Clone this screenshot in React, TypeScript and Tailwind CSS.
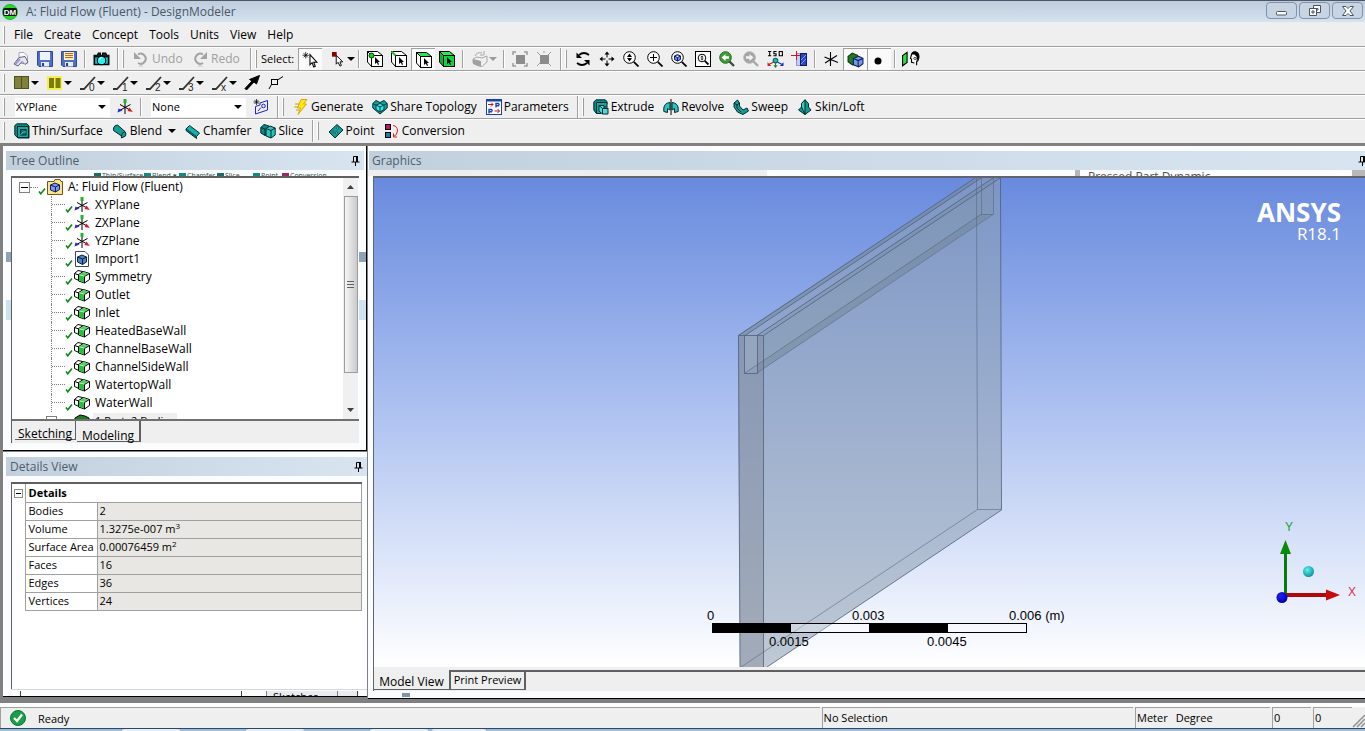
import type { ReactNode } from 'react'

type IconProps = { children: ReactNode; size?: number }

function Icon({ children, size = 16 }: IconProps) {
  return (
    <svg width={size} height={size} viewBox="0 0 16 16" fill="none" stroke="#000" strokeWidth="1" className="shrink-0" aria-hidden="true">
      {children}
    </svg>
  )
}

function Arrow({ muted = false }: { muted?: boolean }) {
  return (
    <svg width="8" height="4" viewBox="0 0 8 4" className="shrink-0" aria-hidden="true">
      <path d="M0 0H8L4 4Z" fill={muted ? '#9a9a9a' : '#000'} />
    </svg>
  )
}

/* ---------- toolbar icons ---------- */

const OpenIcon = () => (
  <Icon>
    <path d="M6 1.500H11L14.500 5V12.500H6Z" fill="#fafaff" stroke="#a8a8bc" />
    <path d="M1 13L6 6.500L12 5.500L15 11L12 13.500L9 10.500L5 15Z" fill="#e6e6f0" stroke="#606080" />
    <path d="M2.500 13L7 8" stroke="#9c9cd8" strokeWidth="2" />
  </Icon>
)

const SaveIcon = ({ lines = false }: { lines?: boolean }) => (
  <Icon>
    <path d="M.5.5H15.500V15.500H2L.5 14Z" fill="#5070c8" stroke="#2c4898" />
    <rect x="3" y="1" width="10" height="8" fill={lines ? '#fff0c0' : '#eef2ff'} stroke="none" />
    {lines && <path d="M4 2.500H12M4 4.500H12M4 6.500H12" stroke="#c8641e" />}
    <rect x="4" y="11" width="8" height="4.500" fill="#e8ecf8" stroke="none" />
    <rect x="5" y="12" width="2" height="3" fill="#26408c" stroke="none" />
  </Icon>
)

const CameraIcon = () => (
  <Icon size={17}>
    <path d="M1 4H4L5 2H7V4H9V2H12L13 4H15V13H1Z" fill="#222" />
    <rect x="1.500" y="5.500" width="13" height="7" fill="#1bbcbc" />
    <circle cx="8" cy="9" r="4" fill="#2cf0f4" stroke="#000" />
    <path d="M6 8L8 6" stroke="#fff" />
  </Icon>
)

const UndoIcon = () => (
  <Icon>
    <path d="M5 3.500A5 5 0 1 1 5 12" stroke="#a3a3a3" strokeWidth="2" />
    <path d="M1 1V8H8Z" fill="#a3a3a3" stroke="none" />
    <path d="M5.500 15H10" stroke="#c4c4c4" />
  </Icon>
)

const RedoIcon = () => (
  <Icon>
    <path d="M11 3.500A5 5 0 1 0 11 12" stroke="#a3a3a3" strokeWidth="2" />
    <path d="M15 1V8H8Z" fill="#a3a3a3" stroke="none" />
    <path d="M6 15H10.500" stroke="#c4c4c4" />
  </Icon>
)

const NewSelectIcon = () => (
  <Icon size={17}>
    <path d="M3.500 1V7M.5 4H6.500M1.500 2L5.500 6M5.500 2L1.500 6" strokeWidth=".7" />
    <path d="M7.500 3.500V13L9.500 11L11 15L12.500 14.300L11 10.500H14Z" fill="#fff" />
  </Icon>
)

const FilterIcon = ({ kind }: { kind: 'point' | 'edge' | 'face' | 'body' }) => (
  <Icon>
    <path d="M.5.500H10.500L15.500 4.500H4.500Z" fill={kind === 'face' || kind === 'body' ? '#28e850' : '#fff'} />
    <path d="M.5.500V11L4.500 15.500V4.500Z" fill={kind === 'body' ? '#0eb02c' : '#fff'} />
    <rect x="4.500" y="4.500" width="11" height="11" fill={kind === 'body' ? '#12d438' : '#fff'} />
    <path d="M8 6V13L9.700 11.500L11 14L12 13.500L11 11H13Z" fill="#000" stroke="none" />
    {kind === 'point' && <circle cx="4.500" cy="4.500" r="2.500" fill="#28c828" stroke="#064006" />}
    {kind === 'edge' && <path d="M.5.500L4.500 4.500" stroke="#28b828" strokeWidth="2" />}
  </Icon>
)

const ExtendIcon = () => (
  <Icon>
    <path d="M1 8L5 6L10 7L15 5V11L10 15.500L5 14.500L1 12Z" fill="#f0f0f0" stroke="#a8a8a8" />
    <path d="M1 8L9 10V15.500L1 13Z" fill="#a0a0a0" stroke="none" />
    <path d="M3 5Q5 .500 10 2M12 0V4H8" stroke="#a8a8a8" />
  </Icon>
)

const BoxSelectIcon = ({ cross = false }: { cross?: boolean }) => (
  <Icon>
    <rect x="4" y="4" width="9" height="9" fill="#8c8c8c" stroke="none" />
    {cross ? (
      <path d="M1 1L4 4M15 1L12 4M1 15L4 12M15 15L12 12M8 0V2" stroke="#9c9c9c" />
    ) : (
      <path d="M1 4V1H4M12 1H15V4M15 12V15H12M4 15H1V12" stroke="#9c9c9c" strokeWidth="1.500" />
    )}
  </Icon>
)

const RotateIcon = () => (
  <Icon>
    <path d="M4 4Q9 0 14 4" strokeWidth="1.800" />
    <path d="M1.500 1.500V7H7Z" fill="#000" stroke="none" />
    <path d="M12 12Q7 16 2 12" strokeWidth="1.800" />
    <path d="M14.500 14.500V9H9Z" fill="#000" stroke="none" />
  </Icon>
)

const PanIcon = () => (
  <Icon>
    <path d="M8 2V6.500M8 9.500V14M2 8H6.500M9.500 8H14" />
    <path d="M8 .500L10.500 3.500H5.500ZM8 15.500L10.500 12.500H5.500ZM.5 8L3.500 5.500V10.500ZM15.500 8L12.500 5.500V10.500Z" fill="#000" stroke="none" />
  </Icon>
)

const LensIcon = ({ kind }: { kind: 'zoom' | 'plus' | 'fit' | 'window' }) => (
  <Icon>
    {kind === 'window' && <rect x=".5" y=".5" width="15" height="15" fill="#fff" />}
    <circle cx={kind === 'window' ? 7 : 6.5} cy={kind === 'window' ? 7 : 6.5} r={kind === 'window' ? 3.8 : 5.8} fill="#fff" />
    <path d={kind === 'window' ? 'M9.800 9.800L13.500 13.500' : 'M10.800 10.800L15.500 15.500'} strokeWidth="1.800" />
    {kind === 'plus' && <path d="M6.500 3V10M3 6.500H10" />}
    {kind === 'fit' && <path d="M3.500 5L6.500 3.500L9.500 5V8.500L6.500 10L3.500 8.500ZM3.500 5L6.500 6.500L9.500 5M6.500 6.500V10" fill="#6c88f0" stroke="#101c70" />}
    {kind === 'zoom' && <path d="M6.500 2.500L9 6H4ZM6.500 10.500L9 7H4Z" fill="#000" stroke="none" />}
    {kind === 'window' && <path d="M7 4.500L8.500 6.500H5.500ZM7 9.500L8.500 7.500H5.500Z" fill="#000" stroke="none" />}
  </Icon>
)

const ViewStepIcon = ({ muted = false }: { muted?: boolean }) => (
  <Icon>
    <path d="M10.500 10.500L15 15" stroke={muted ? '#a8a8a8' : '#404840'} strokeWidth="2.400" />
    <circle cx="6.500" cy="6.500" r="5.800" fill={muted ? '#a4a4a4' : '#3c9c34'} stroke={muted ? '#b4b4b4' : '#286820'} />
    {muted ? (
      <path d="M10.500 6.500L6.500 3V5.200H3V7.800H6.500V10Z" fill="#f4f4f4" stroke="none" />
    ) : (
      <path d="M2.500 6.500L6.500 3V5.200H10V7.800H6.500V10Z" fill="#fff" stroke="none" />
    )}
  </Icon>
)

const IsoIcon = () => (
  <Icon size={17}>
    <path d="M2.500 0V5M1 .500H4M1 4.500H4M9 .500H6.500V2.500H8.500V4.500H6M11.500.500H14.500V4.500H11.500Z" />
    <circle cx="8" cy="9" r="2.200" fill="#20b8b8" stroke="#086868" />
    <path d="M6 10.500L2 12.500" stroke="#d01818" />
    <path d="M.5 10.500V14H4Z" fill="#d01818" stroke="none" />
    <path d="M10 10.500L14 12.500" stroke="#1830c0" />
    <path d="M15.500 10.500V14H12Z" fill="#1830c0" stroke="none" />
    <path d="M8 11V14" stroke="#108830" />
    <path d="M6 13.500H10L8 16Z" fill="#108830" stroke="none" />
  </Icon>
)

const LookAtIcon = () => (
  <Icon>
    <rect x="5.500" y="2.500" width="4" height="12" fill="#c4ccf4" stroke="#8c98d8" />
    <rect x="9.500" y="2.500" width="6" height="12" fill="#2848c8" stroke="#101c60" />
    <path d="M10 9L15 4M10 13L15 8" stroke="#8ca0f0" />
    <path d="M0 4.500H9M5.500 0V9" stroke="#d01818" />
  </Icon>
)

const PlaneIcon = () => (
  <Icon>
    <path d="M7.500 1V15M1.500 6L15 11.500M2 12L14 4.500" strokeWidth="1.100" />
  </Icon>
)

const TriadIcon = () => (
  <Icon>
    <path d="M8 3V15M2.500 11.500L13.500 5.500M3 5.500L13 11" />
    <path d="M6.500 0H9.500V4H6.500Z" fill="#18b828" stroke="none" />
    <path d="M15.800 13L10.500 12L12.500 8.500Z" fill="#d81c28" stroke="none" />
    <path d="M.5 13.500L1.500 9.500L5.500 11.500Z" fill="#2028d8" stroke="none" />
  </Icon>
)

const DisplayModelIcon = () => (
  <Icon size={17}>
    <path d="M1 5L5 2L10 4V10L5 13L1 10Z" fill="#1c7c24" stroke="#083808" />
    <path d="M6 7L11 5L15 7V12L11 15L6 13Z" fill="#7898ec" stroke="#101c60" />
    <path d="M6 7L10.500 9L15 7M10.500 9V15" stroke="#101c60" />
  </Icon>
)

const DisplayPointsIcon = () => (
  <Icon>
    <circle cx="6" cy="9" r="3.500" fill="#000" stroke="none" />
  </Icon>
)

const FaceViewIcon = () => (
  <Icon size={18}>
    <path d="M.5 5L4.500 2V11L.5 14Z" fill="#20e838" />
    <path d="M8.500 4Q9 1.500 12 1.500Q15.500 2.500 15 7Q14.500 9.500 13 10.500V13.500M8.500 4L7.500 7.500L8.500 8V11L11 11.500" fill="#fff" />
    <path d="M8.500 4Q9 1 12 1.500Q15.500 2.500 15 7L13 10L13 6L11 4Z" fill="#000" stroke="none" />
    <circle cx="11.500" cy="7.500" r="1" fill="#fff" stroke="#000" strokeWidth=".6" />
  </Icon>
)

const EdgeColorIcon = ({ bright = false }: { bright?: boolean }) => (
  <Icon>
    {bright ? (
      <>
        <rect x="0" y="1" width="15" height="14" fill="#f4f050" stroke="none" />
        <path d="M2 3H7V13H2ZM8.500 3H13.500V13H8.500Z" fill="#7c7c10" stroke="none" />
      </>
    ) : (
      <>
        <rect x=".5" y="1.500" width="14" height="12" fill="#80803c" stroke="#50501c" />
        <path d="M7.500 2V13" stroke="#50501c" />
      </>
    )}
  </Icon>
)

const EdgeLineIcon = ({ mark }: { mark: string }) => (
  <Icon>
    <path d="M0 14H4L15 2" strokeWidth="1.800" stroke="#333" />
    <text x="9" y="16" fontSize="10" fill="#222" stroke="none" fontFamily="Liberation Sans, sans-serif">
      {mark}
    </text>
  </Icon>
)

const BigArrowIcon = () => (
  <Icon>
    <path d="M15.500.500L12.500 9L10 7L2.500 15L1 13.500L8 6L5.500 4.500Z" fill="#000" />
  </Icon>
)

const VertexFlagIcon = () => (
  <Icon>
    <rect x="3.500" y="4.500" width="6" height="5" fill="#f0f0f0" />
    <path d="M9.500 5L15 1.500M3.500 9.500L1 14" />
  </Icon>
)

const NewSketchIcon = () => (
  <Icon>
    <path d="M2.500 7.500L7 6V4L14.500 1.500V11L2.500 15Z" stroke="#2020c8" />
    <circle cx="10.500" cy="7" r="1.800" stroke="#2020c8" />
    <path d="M5 12L8 8.500" stroke="#2020c8" />
    <path d="M3.500 0V6M.500 3H6.500M1.500 1L5.500 5M5.500 1L1.500 5" strokeWidth=".7" />
  </Icon>
)

const GenerateIcon = () => (
  <Icon>
    <path d="M8 .5H14L10.500 5H13.500L5 15.500L7.500 9H4.500Z" fill="#ffe818" stroke="#d8a808" />
    <path d="M2 5H6M1 8H5M3 11H6" stroke="#d0a010" />
  </Icon>
)

const ShareIcon = () => (
  <Icon>
    <path d="M.8 4.500L4 1.500L8 3.500L12 1.500L15.200 4.500V9L8 15L.8 9Z" fill="#18a0a0" stroke="#022c2c" />
    <path d="M4 6L8 4.500L12 6V10.500L8 13L4 10.500Z" fill="#38e4e4" stroke="#044" />
    <path d="M4 6L8 8L12 6M8 8V13M.8 4.500L4 6M15.200 4.500L12 6" stroke="#044" />
  </Icon>
)

const ParametersIcon = () => (
  <Icon>
    <rect x=".5" y=".5" width="15" height="15" fill="#fff" stroke="#1840a8" />
    <path d="M1 1.500H15" stroke="#1840a8" strokeWidth="2" />
    <path d="M10 8.500V4.500H12.500Q13.800 5.500 12.500 6.800H10M3 14.500V10.500H5.500Q6.800 11.500 5.500 12.800H3" stroke="#1840c8" strokeWidth="1.400" />
    <path d="M2 5.500H7M5 3.500L7 5.500L5 7.500M8.500 12H13.500M11.500 10L13.500 12L11.500 14" stroke="#c01818" />
  </Icon>
)

const ExtrudeIcon = () => (
  <Icon>
    <path d="M.8 3L3 .8H12L14 2.500V5H6V14H3L.8 11Z" fill="#0c8484" stroke="#022c2c" />
    <path d="M3.500 3.500H14V8H8V14.500H3.500Z" fill="#18a4a0" stroke="#022c2c" />
    <path d="M6 6.500H11V9H15V15H9.500L6 12Z" fill="#48dcdc" stroke="#022c2c" />
    <path d="M6 6.500L9.500 9.500H15M9.500 9.500V15" stroke="#022c2c" />
  </Icon>
)

const RevolveIcon = () => (
  <Icon>
    <path d="M.8 9Q1.500 4 7 3.500V11L4.500 9.500V13.500L.8 12.500Z" fill="#28c4c4" stroke="#022c2c" />
    <path d="M15.200 9Q14.500 4 9 3.500V11L11.500 9.500V13.500L15.200 12.500Z" fill="#28c4c4" stroke="#022c2c" />
    <path d="M8 0V16" />
  </Icon>
)

const SweepIcon = () => (
  <Icon>
    <path d="M1 4L4.500 1L6.500 4V7L10 11L14 9L15.500 12L10 15.500L4.500 13L1 8Z" fill="#149c98" stroke="#022c2c" />
    <path d="M1 4L4 6L6.500 4M4 6V9L8 13" stroke="#022c2c" />
  </Icon>
)

const LoftIcon = () => (
  <Icon>
    <path d="M8 .8L11.500 4.500V8L14 11L8 15.500L1.500 11L4.500 8V4.500Z" fill="#149890" stroke="#022c2c" />
    <path d="M8 .8V15.500L4.500 8V4.500Z" fill="#40c8c4" stroke="#022c2c" />
  </Icon>
)

const ThinIcon = () => (
  <Icon>
    <path d="M.8 2.500L3 .8H13L15 3V15H4L.8 12Z" fill="#0c8884" stroke="#022c2c" />
    <rect x="3.500" y="3.500" width="11" height="11" fill="#18a4a0" stroke="#022c2c" />
    <rect x="6.500" y="6.500" width="5.500" height="5.500" fill="#0a6c6c" stroke="#022c2c" />
    <path d="M6.500 12L9 9H12" stroke="#3cc" />
  </Icon>
)

const BlendIcon = () => (
  <Icon>
    <path d="M1.500 5Q2.500 2 5.500 2L13 8.500Q14.500 11 13.500 13L9.500 15Q9 14 9.500 13L1.500 7.500Z" fill="#149c98" stroke="#022c2c" />
    <path d="M9.500 13Q9.500 9.500 13 8.500" stroke="#022c2c" />
  </Icon>
)

const ChamferIcon = () => (
  <Icon>
    <path d="M1 6L4.500 2.500L14.500 10L11.500 13.500Z" fill="#18b0ac" stroke="#022c2c" />
    <path d="M1 6V7.500L11.500 15.500V13.500" fill="#0a6c6c" stroke="#022c2c" />
  </Icon>
)

const SliceIcon = () => (
  <Icon>
    <path d="M.8 4.500L4 1.500L9 3V11L5 12.500L.8 10Z" fill="#0c8884" stroke="#022c2c" />
    <path d="M6 5.500L10 3L15.200 5V12L11 15L6 13Z" fill="#28c4c0" stroke="#022c2c" />
    <path d="M6 5.500L11 7.500L15.200 5M11 7.500V15M.8 4.500L5 6V12.500" stroke="#022c2c" />
  </Icon>
)

const PointIcon = () => (
  <Icon>
    <path d="M1 9L9 1.500L15 7L7 15Z" fill="#149c98" stroke="#022c2c" />
    <circle cx="5" cy="9" r="1" fill="#9ff" stroke="#022c2c" strokeWidth=".7" />
    <circle cx="9.500" cy="5" r="1" fill="#9ff" stroke="#022c2c" strokeWidth=".7" />
    <circle cx="8.500" cy="10" r="1" fill="#9ff" stroke="#022c2c" strokeWidth=".7" />
  </Icon>
)

const ConversionIcon = () => (
  <Icon>
    <rect x="1.500" y="1.500" width="5" height="5" fill="#c01070" />
    <rect x="1.500" y="9.500" width="5" height="5" fill="#1880b0" />
    <path d="M9 2.500Q13.500 3 13.500 8Q13 12.500 9.500 13.500M9.500 10.500V14H13" stroke="#e02020" />
  </Icon>
)

/* ---------- tree icons ---------- */

const CheckMark = () => (
  <svg width="8" height="8" viewBox="0 0 8 8" className="mt-2 shrink-0" aria-hidden="true">
    <path d="M1 4.500L2.800 6.800L7 1.500" fill="none" stroke="#108818" strokeWidth="1.600" />
  </svg>
)

const FluidIcon = () => (
  <Icon>
    <path d="M.5 2.500H7L8 .500H13L14 2.500H15.500V15.500H.5Z" fill="#fce48c" stroke="#6c5818" />
    <path d="M3.500 6L8 4L12.500 6V10.500L8.500 13L3.500 11Z" fill="#7c98f0" stroke="#101c60" />
    <path d="M3.500 6L8.500 8L12.500 6M8.500 8V13" stroke="#101c60" />
  </Icon>
)

const ImportIcon = () => (
  <Icon>
    <path d="M1.500.500H11L14.500 4V15.500H1.500Z" fill="#fff" stroke="#404860" />
    <path d="M3.500 6L8 4L12.500 6V11L8.500 13.500L3.500 11Z" fill="#4c84c4" stroke="#0c1c40" />
    <path d="M3.500 6L8.500 8L12.500 6M8.500 8V13.500" stroke="#0c1c40" />
  </Icon>
)

const NamedIcon = () => (
  <Icon>
    <path d="M.5 4.500L4 1.500L8.500 2.500V9L5 11.500L.5 9.500Z" fill="#fff" />
    <path d="M.5 4.500L5 6L8.500 2.500" />
    <path d="M4.500 5.500L9.500 2.500L15.500 4.500V10.500L10.500 14L4.500 12Z" fill="#fff" />
    <path d="M5 6L10 7.500V13.500L5 11.500Z" fill="#28c038" stroke="none" />
    <path d="M5.500 5.500L9.500 3L14.500 4.500L10.500 7Z" fill="#48d858" stroke="none" />
    <path d="M10.500 7.500L15.500 4.500M10.500 7.500V14" />
  </Icon>
)

const PinIcon = () => (
  <svg width="9" height="10" viewBox="0 0 9 10" fill="none" stroke="#000" className="shrink-0" aria-hidden="true">
    <path d="M2.500.500H6.500V6M2.500.500V6M.500 6H8.500M4.500 6V10" />
    <path d="M6 0V6" strokeWidth="2" />
  </svg>
)

/* ---------- toolbar pieces ---------- */

const Grip = () => <span className="ml-[3px] mr-1 h-[18px] w-[2px] shrink-0 border-r border-[#9c9c9c] bg-white" />
const Divider = () => <span className="mx-[3px] h-[18px] w-[2px] shrink-0 border-l border-[#a0a0a0] bg-white" />
const GroupEnd = () => <span className="ml-1 h-[22px] w-[2px] shrink-0 border-l border-[#a0a0a0] bg-white" />

function Tool({ label, pressed = false, children }: { label: string; pressed?: boolean; children: ReactNode }) {
  return (
    <button
      type="button"
      aria-label={label}
      className={
        'flex h-[22px] w-6 shrink-0 items-center justify-center ' +
        (pressed ? 'border-l border-t border-[#a0a0a0] bg-[#fafafa]' : '')
      }
    >
      {children}
    </button>
  )
}

function SplitTool({ label, muted = false, children }: { label: string; muted?: boolean; children: ReactNode }) {
  return (
    <button type="button" aria-label={label} className="flex h-[22px] w-[33px] shrink-0 items-center gap-px pl-[5px]">
      {children}
      <Arrow muted={muted} />
    </button>
  )
}

function TextTool({ icon, text, drop = false }: { icon: ReactNode; text: string; drop?: boolean }) {
  return (
    <button type="button" className="flex h-[22px] shrink-0 items-center gap-[2px] whitespace-nowrap pl-[5px] pr-1 text-[12px]">
      {icon}
      {text}
      {drop && (
        <span className="ml-1">
          <Arrow />
        </span>
      )}
    </button>
  )
}

function Row({ children }: { children: ReactNode }) {
  return <div className="flex h-6 shrink-0 items-center border-b border-[#a0a0a0] border-t border-t-white">{children}</div>
}

function Combo({ label, value }: { label: string; value: string }) {
  return (
    <div className="relative ml-[6px] flex w-[95px] shrink-0">
      <select aria-label={label} defaultValue={value} className="h-[19px] w-full appearance-none bg-white pl-px text-[11px]">
        <option>{value}</option>
      </select>
      <span className="pointer-events-none absolute right-1 top-0 flex h-full items-center">
        <Arrow />
      </span>
    </div>
  )
}

function TitleBar() {
  return (
    <header className="flex h-[22px] shrink-0 items-center border-t border-[#4c5664] bg-gradient-to-b from-[#becddd] to-[#d5e2ef] pl-[2px] pr-[2px]">
      <svg width="16" height="16" viewBox="0 0 16 16" aria-hidden="true">
        <circle cx="8" cy="8" r="7.500" fill="#28d828" stroke="#28b028" />
        <rect x="1" y="4" width="14" height="8" rx="2" fill="#041804" />
        <text x="8" y="11" fontSize="8" fontWeight="700" fill="#fff" textAnchor="middle" fontFamily="Liberation Sans, sans-serif">
          DM
        </text>
      </svg>
      <h1 className="ml-2 text-[12px] text-[#4a5866]">A: Fluid Flow (Fluent) - DesignModeler</h1>
      <div className="ml-auto flex h-[17px] gap-[2px] self-start pt-px">
        <button type="button" aria-label="Minimize" className="flex h-[17px] w-[31px] items-center justify-center rounded-sm border border-[#8392a8] bg-[#c6d4e4]">
          <svg width="12" height="10" viewBox="0 0 12 10">
            <rect x=".5" y="5.500" width="10" height="3.500" rx="1" fill="#fff" stroke="#4c5464" />
          </svg>
        </button>
        <button type="button" aria-label="Restore" className="flex h-[17px] w-[31px] items-center justify-center rounded-sm border border-[#8392a8] bg-[#c6d4e4]">
          <svg width="12" height="11" viewBox="0 0 12 11" fill="#fff" stroke="#4c5464">
            <path d="M4.500.500H11.500V7.500H4.500Z" />
            <path d="M7 3.500H9V5H7Z" />
            <path d="M.5 3.500H7.500V10.500H.5Z" />
            <path d="M3 6H5V8H3Z" />
          </svg>
        </button>
        <button type="button" aria-label="Close" className="flex h-[17px] w-[31px] items-center justify-center rounded-sm border border-[#8392a8] bg-[#c6d4e4]">
          <svg width="12" height="10" viewBox="0 0 12 10">
            <path d="M.5.500H4L6 2.500L8 .500H11.500L8 5L11.500 9.500H8L6 7.500L4 9.500H.5L4 5Z" fill="#fff" stroke="#4c5464" />
          </svg>
        </button>
      </div>
    </header>
  )
}

function MenuBar() {
  return (
    <nav className="flex h-[25px] shrink-0 items-center border-b border-[#a0a0a0] pt-px">
      <Grip />
      <div className="flex gap-[11px] pl-[5px] text-[12px]">
        {['File', 'Create', 'Concept', 'Tools', 'Units', 'View', 'Help'].map((item) => (
          <button key={item} type="button">
            {item}
          </button>
        ))}
      </div>
    </nav>
  )
}

function Toolbars() {
  return (
    <>
      <Row>
        <Grip />
        <Tool label="Open"><OpenIcon /></Tool>
        <Tool label="Save"><SaveIcon /></Tool>
        <Tool label="Export"><SaveIcon lines /></Tool>
        <Divider />
        <Tool label="Capture"><CameraIcon /></Tool>
        <GroupEnd />
        <Grip />
        <button type="button" disabled className="flex h-[22px] w-[59px] shrink-0 items-center gap-[3px] pl-[5px] text-[12px] text-[#a0a0a0]">
          <UndoIcon />
          Undo
        </button>
        <button type="button" disabled className="flex h-[22px] w-[59px] shrink-0 items-center gap-[3px] pl-[5px] text-[12px] text-[#a0a0a0]">
          <RedoIcon />
          Redo
        </button>
        <GroupEnd />
        <Grip />
        <span className="w-[37px] shrink-0 text-[11px]">Select:</span>
        <Tool label="New selection" pressed><NewSelectIcon /></Tool>
        <button type="button" aria-label="Select mode" className="flex h-[22px] w-[33px] shrink-0 items-center pl-[10px]">
          <Icon size={15}>
            <rect x="0" y="0" width="5" height="5" fill="#900000" stroke="none" />
            <path d="M4.500 3.500V13L6.500 11L8.500 15L10 14.300L8.500 10.500H11.500Z" fill="#fff" />
          </Icon>
          <Arrow />
        </button>
        <Divider />
        <Tool label="Points"><FilterIcon kind="point" /></Tool>
        <Tool label="Edges"><FilterIcon kind="edge" /></Tool>
        <Tool label="Faces" pressed><FilterIcon kind="face" /></Tool>
        <Tool label="Bodies"><FilterIcon kind="body" /></Tool>
        <Divider />
        <SplitTool label="Extend selection" muted><ExtendIcon /></SplitTool>
        <Divider />
        <Tool label="Expand"><BoxSelectIcon /></Tool>
        <Tool label="Shrink"><BoxSelectIcon cross /></Tool>
        <GroupEnd />
        <Grip />
        <Tool label="Rotate"><RotateIcon /></Tool>
        <Tool label="Pan"><PanIcon /></Tool>
        <Tool label="Zoom"><LensIcon kind="zoom" /></Tool>
        <Tool label="Box zoom"><LensIcon kind="plus" /></Tool>
        <Tool label="Zoom to fit"><LensIcon kind="fit" /></Tool>
        <Tool label="Magnifier"><LensIcon kind="window" /></Tool>
        <Tool label="Previous view"><ViewStepIcon /></Tool>
        <Tool label="Next view"><ViewStepIcon muted /></Tool>
        <Tool label="Isometric"><IsoIcon /></Tool>
        <Tool label="Look at plane"><LookAtIcon /></Tool>
        <Divider />
        <Tool label="Display plane"><PlaneIcon /></Tool>
        <Tool label="Display model" pressed><DisplayModelIcon /></Tool>
        <Tool label="Display points" pressed><DisplayPointsIcon /></Tool>
        <Divider />
        <Tool label="Look at face"><FaceViewIcon /></Tool>
      </Row>
      <Row>
        <Grip />
        <SplitTool label="Face color"><EdgeColorIcon /></SplitTool>
        <SplitTool label="Edge color"><EdgeColorIcon bright /></SplitTool>
        {['0', '1', '2', '3', 'x'].map((mark) => (
          <SplitTool key={mark} label={'Edge joint ' + mark}>
            <EdgeLineIcon mark={mark} />
          </SplitTool>
        ))}
        <Tool label="Direction"><BigArrowIcon /></Tool>
        <Tool label="Vertices"><VertexFlagIcon /></Tool>
      </Row>
      <Row>
        <Grip />
        <Combo label="Active plane" value="XYPlane" />
        <span className="w-[3px] shrink-0" />
        <Tool label="New plane"><TriadIcon /></Tool>
        <Divider />
        <Combo label="Active sketch" value="None" />
        <span className="w-[3px] shrink-0" />
        <Tool label="New sketch"><NewSketchIcon /></Tool>
        <GroupEnd />
        <Grip />
        <TextTool icon={<GenerateIcon />} text="Generate" />
        <TextTool icon={<ShareIcon />} text="Share Topology" />
        <TextTool icon={<ParametersIcon />} text="Parameters" />
        <GroupEnd />
        <Grip />
        <TextTool icon={<ExtrudeIcon />} text="Extrude" />
        <TextTool icon={<RevolveIcon />} text="Revolve" />
        <TextTool icon={<SweepIcon />} text="Sweep" />
        <TextTool icon={<LoftIcon />} text="Skin/Loft" />
      </Row>
      <div className="flex h-6 shrink-0 items-center border-t border-white pb-px">
        <Grip />
        <TextTool icon={<ThinIcon />} text="Thin/Surface" />
        <TextTool icon={<BlendIcon />} text="Blend" drop />
        <TextTool icon={<ChamferIcon />} text="Chamfer" />
        <TextTool icon={<SliceIcon />} text="Slice" />
        <GroupEnd />
        <Grip />
        <TextTool icon={<PointIcon />} text="Point" />
        <TextTool icon={<ConversionIcon />} text="Conversion" />
      </div>
    </>
  )
}

/* ---------- side panels ---------- */

function PanelHeader({ title }: { title: string }) {
  return (
    <div className="flex h-[19px] shrink-0 items-center justify-between bg-gradient-to-r from-[#c2d0de] to-[#d8e5f1] pl-1 pr-1">
      <h2 className="text-[12px] text-[#4f5d6b]">{title}</h2>
      <PinIcon />
    </div>
  )
}

function TreeNode({ label, icon }: { label: string; icon: ReactNode }) {
  return (
    <li className="flex h-[18px] items-center pl-[39px]">
      <span className="h-full w-[14px] shrink-0 border-l border-dotted border-[#808080] pt-2">
        <span className="block border-t border-dotted border-[#808080]" />
      </span>
      <CheckMark />
      <span className="ml-px">{icon}</span>
      <span className="ml-[5px]">{label}</span>
    </li>
  )
}

const namedSelections = ['Symmetry', 'Outlet', 'Inlet', 'HeatedBaseWall', 'ChannelBaseWall', 'ChannelSideWall', 'WatertopWall', 'WaterWall']

const shadowTools = [
  { text: 'Thin/Surface', width: 'w-[50px]', color: 'bg-[#1c6c68]' },
  { text: 'Blend ▾', width: 'w-[35px]', color: 'bg-[#148884]' },
  { text: 'Chamfer', width: 'w-[38px]', color: 'bg-[#148884]' },
  { text: 'Slice', width: 'w-[36px]', color: 'bg-[#1c6c68]' },
  { text: 'Point', width: 'w-[29px]', color: 'bg-[#148884]' },
  { text: 'Conversion', width: 'w-[60px]', color: 'bg-[#a02868]' },
]

function TreeOutline() {
  return (
    <section className="flex h-[305px] shrink-0 flex-col border-b border-r border-black bg-[#fbfcfe] pl-[3px] pt-[5px]">
      <div className="pr-[2px]">
        <PanelHeader title="Tree Outline" />
      </div>
      <div className="flex h-[6px] shrink-0 overflow-hidden pl-[88px] pt-px text-[7px] leading-[9px] text-[#30504c]" aria-hidden="true">
        {shadowTools.map((tool) => (
          <span key={tool.text} className={'flex shrink-0 gap-px whitespace-nowrap ' + tool.width}>
            <span className={'mt-[2px] h-[5px] w-[7px] shrink-0 ' + tool.color} />
            {tool.text}
          </span>
        ))}
      </div>
      <div className="flex min-h-0 flex-1 bg-[linear-gradient(180deg,#fbfcfe_76px,#8fa3b8_76px,#8fa3b8_86px,#fbfcfe_86px,#fbfcfe_124px,#cfe2f4_124px,#cfe2f4_144px,#fbfcfe_144px)] pl-[5px]">
        <div className="mr-[7px] flex min-w-0 flex-1 flex-col border-l border-[#606060] bg-[#efefef]">
          <div className="flex h-[245px] shrink-0 border-b-2 border-t-2 border-b-[#707070] border-t-[#606060] bg-white pr-px">
            <ul className="min-w-0 flex-1 overflow-hidden text-[12px]">
              <li className="flex h-[18px] items-center pl-[7px]">
                <button type="button" aria-label="Collapse" className="flex h-[11px] w-[11px] items-center justify-center border border-[#808080]">
                  <span className="h-px w-[7px] bg-black" />
                </button>
                <span className="w-2 border-t border-dotted border-[#808080]" />
                <CheckMark />
                <span className="ml-px"><FluidIcon /></span>
                <span className="ml-[5px]">A: Fluid Flow (Fluent)</span>
              </li>
              <TreeNode label="XYPlane" icon={<TriadIcon />} />
              <TreeNode label="ZXPlane" icon={<TriadIcon />} />
              <TreeNode label="YZPlane" icon={<TriadIcon />} />
              <TreeNode label="Import1" icon={<ImportIcon />} />
              {namedSelections.map((name) => (
                <TreeNode key={name} label={name} icon={<NamedIcon />} />
              ))}
              <li className="flex h-[18px] items-center pl-[34px]">
                <span className="h-[11px] w-[11px] border border-[#808080]" />
                <span className="ml-[17px]">
                  <Icon>
                    <path d="M1 5L6 2L11 3L15 5V12L9 15L1 12Z" fill="#1c7c24" />
                  </Icon>
                </span>
                <span className="ml-[3px] bg-[#efefef] px-[2px] text-[11px]">1 Part, 2 Bodies</span>
              </li>
            </ul>
            <div className="flex w-[15px] shrink-0 flex-col items-center bg-[#f0f0f0]">
              <span className="flex h-[18px] items-center">
                <svg width="7" height="4" viewBox="0 0 7 4"><path d="M0 4H7L3.500 0Z" fill="#404040" /></svg>
              </span>
              <span className="flex h-[177px] w-[14px] flex-col items-center justify-center gap-[2px] border border-[#9c9c9c] bg-gradient-to-r from-[#f6f6f6] to-[#cacaca]">
                <span className="h-px w-[7px] bg-[#606060]" />
                <span className="h-px w-[7px] bg-[#606060]" />
                <span className="h-px w-[7px] bg-[#606060]" />
              </span>
              <span className="mt-auto flex h-[18px] items-center">
                <svg width="7" height="4" viewBox="0 0 7 4"><path d="M0 0H7L3.500 4Z" fill="#404040" /></svg>
              </span>
            </div>
          </div>
          <div className="flex items-start pl-[3px] text-[12px]">
            <button type="button" className="h-[19px] w-[61px] border-b border-r border-[#606060] pt-1">Sketching</button>
            <button type="button" className="ml-px h-[21px] w-[64px] border-b border-r-2 border-[#606060] pt-1.5">Modeling</button>
          </div>
        </div>
      </div>
      <div className="h-[7px] shrink-0" />
    </section>
  )
}

const details: [string, ReactNode][] = [
  ['Bodies', '2'],
  ['Volume', <>1.3275e-007 m<sup className="text-[8px]">3</sup></>],
  ['Surface Area', <>0.00076459 m<sup className="text-[8px]">2</sup></>],
  ['Faces', '16'],
  ['Edges', '36'],
  ['Vertices', '24'],
]

function DetailsView() {
  return (
    <section className="mt-px flex min-h-0 flex-1 flex-col border-b border-black bg-[#fbfcfe] pl-[3px] pt-[5px]">
      <PanelHeader title="Details View" />
      <div className="mt-1.5 flex min-h-0 flex-1 pl-[5px] pr-[5px]">
        <div className="min-w-0 flex-1 border-l border-t-2 border-[#606060] bg-white">
          <table className="w-full table-fixed border-collapse text-[11px]">
            <colgroup>
              <col className="w-[13px]" />
              <col className="w-[72px]" />
              <col />
            </colgroup>
            <tbody>
              <tr className="h-[18px]">
                <td className="p-0 pl-[2px]">
                  <button type="button" aria-label="Collapse" className="flex h-[9px] w-[9px] items-center justify-center border border-[#909080]">
                    <span className="h-px w-[5px] bg-black" />
                  </button>
                </td>
                <th colSpan={2} className="border border-t-0 border-[#a0a0a0] p-0 pl-[3px] text-left leading-4">Details</th>
              </tr>
              {details.map(([name, value]) => (
                <tr key={name} className="h-[18px]">
                  <td className="p-0" />
                  <th scope="row" className="whitespace-nowrap border border-[#a0a0a0] p-0 pl-[3px] text-left font-normal leading-4">{name}</th>
                  <td className="border border-[#a0a0a0] bg-[#e8e7e3] p-0 pl-[2px] leading-4">{value}</td>
                </tr>
              ))}
            </tbody>
          </table>
        </div>
      </div>
      <div className="ml-[5px] flex h-[7px] shrink-0 items-end border-t border-[#d8d8d8]" aria-hidden="true">
        <span className="ml-[9px] h-[5px] w-[222px] border-l border-r border-[#404040]" />
        <span className="ml-6 flex h-[5px] w-[72px] overflow-hidden border-l border-r border-[#808080] bg-[#e8ebef] pl-[6px] text-[11px] leading-[12px]">Sketches</span>
        <span className="h-[5px] w-5 border-r border-[#404040] bg-[#e8ebef]" />
      </div>
    </section>
  )
}

/* ---------- graphics ---------- */

function Model() {
  return (
    <svg className="absolute inset-0 h-full w-full" fontFamily="Liberation Sans, sans-serif" fontSize="13">
      <defs>
        <radialGradient id="cyan" cx=".4" cy=".35" r=".7">
          <stop offset="0" stopColor="#60f0f0" />
          <stop offset="1" stopColor="#089090" />
        </radialGradient>
        <radialGradient id="blue" cx=".4" cy=".35" r=".7">
          <stop offset="0" stopColor="#2020ff" />
          <stop offset="1" stopColor="#0000a0" />
        </radialGradient>
      </defs>
      <g transform="translate(-374 -178)">
        <path d="M738 335L975 178H1000L1001 510L767 667H740Z" fill="#8c9eb2" fillOpacity=".56" />
        <path d="M738 335H763V667H740Z" fill="#7c8494" fillOpacity=".42" />
        <path d="M738 335L975 178H981L745 335Z" fill="#58748c" fillOpacity=".3" />
        <path d="M757 335L993 178H1000L763 335Z" fill="#58748c" fillOpacity=".15" />
        <path d="M763 335L993 178V214L763 369Z" fill="#7c949c" fillOpacity=".28" />
        <path d="M745 373L981 214H993L757 373Z" fill="#607888" fillOpacity=".25" />
        <path d="M744 335H757V373H744Z" fill="#b0c4d8" fillOpacity=".3" />
        <g fill="none" stroke="#53647e" strokeWidth="1" strokeOpacity=".85">
          <path d="M738.500 335.500H763.500V667M738.500 335.500L740 667M738.500 335.500L975 178M745 335.500L981 178M757 335.500L993 178M763.500 335.500L1000 178" />
          <path d="M744.500 335V373.500H757.500V335M1000.500 178L1001.500 510L767 667" />
          <path d="M976.500 178L977.500 509.500H1001M977.500 509.500L741 667M981.500 178V214.500M993.500 178V214.500M981 214.500H993M745 373L981 214.500M757 373L993 214.500" strokeOpacity=".55" />
        </g>

        <rect x="712.500" y="623.500" width="314" height="9" fill="#fff" fillOpacity=".3" stroke="#000" />
        <path d="M712 623H791V633H712ZM869 623H948V633H869Z" />
        <text x="707" y="620">0</text>
        <text x="852" y="620">0.003</text>
        <text x="1009" y="620">0.006 (m)</text>
        <text x="769" y="646">0.0015</text>
        <text x="927" y="646">0.0045</text>

        <path d="M1284 595V553H1287V595Z" fill="#0a7a0a" />
        <path d="M1285.500 540L1291 554H1280Z" fill="#0a8a0a" />
        <path d="M1287 593H1327V597H1287Z" fill="#b00808" />
        <path d="M1340 595L1326 589.500V600.500Z" fill="#c80a0a" />
        <circle cx="1282" cy="597.500" r="5.500" fill="url(#blue)" />
        <circle cx="1308.500" cy="571.500" r="5.500" fill="url(#cyan)" />
        <text x="1285" y="531" fontSize="12" fill="#18a030">Y</text>
        <text x="1348" y="596" fontSize="12" fill="#e03040">X</text>
      </g>
    </svg>
  )
}

function Graphics() {
  return (
    <section className="ml-px flex min-w-0 flex-1 flex-col border-b border-black bg-[#fbfcfe] pt-[5px]">
      <div className="ml-px flex h-[19px] shrink-0 items-center justify-between bg-gradient-to-r from-[#c2d0de] to-[#d8e5f1] pl-[3px]">
        <h2 className="text-[12px] text-[#4f5d6b]">Graphics</h2>
        <span className="flex w-[7px] overflow-hidden"><PinIcon /></span>
      </div>
      <div className="flex h-[6px] shrink-0 justify-end overflow-hidden text-[12px] leading-[13px] text-[#505050]" aria-hidden="true">
        <span className="mr-auto w-[40%] bg-[#efeeee]" />
        <span className="w-[5px] bg-[#b8b8b8]" />
        <span className="ml-2 w-[264px]">Pressed Part Dynamic</span>
        <span className="w-[13px] bg-[#b8b8b8]" />
      </div>
      <div className="ml-[5px] flex min-h-0 flex-1 flex-col border-l border-t-2 border-[#606470]">
        <div className="relative min-h-0 flex-1 overflow-hidden bg-gradient-to-b from-[#698ade] to-white">
          <Model />
          <div className="absolute right-6 top-5 flex flex-col items-end text-white">
            <span className="text-[26px] font-bold leading-7">ANSYS</span>
            <span className="text-[17px] leading-4">R18.1</span>
          </div>
        </div>
        <div className="flex h-6 shrink-0 items-start bg-[#efefef] text-[12px]">
          <button type="button" className="h-[23px] w-[75px] whitespace-nowrap border-b border-[#606060] pt-2 leading-[14px]">Model View</button>
          <div className="mt-[3px] flex flex-1 border-t-2 border-[#606060]">
            <button type="button" className="h-[18px] w-[77px] whitespace-nowrap border-b border-l-2 border-r-2 border-[#606060] text-[11px]">Print Preview</button>
          </div>
        </div>
      </div>
      <div className="h-[7px] shrink-0">
        <span className="ml-[34px] mt-[2px] block h-1 w-2 bg-[#8094a8]" />
      </div>
    </section>
  )
}

function StatusBar() {
  return (
    <footer className="shrink-0 border-t-4 border-white bg-[#efefef]">
      <div className="flex h-[21px] text-[11px] leading-[19px]">
        <div className="flex min-w-0 flex-[819] items-center border-l border-t border-[#a0a0a0] pl-[9px]">
          <svg width="16" height="16" viewBox="0 0 16 16" aria-hidden="true">
            <circle cx="8" cy="8" r="7.500" fill="#18a048" stroke="#107038" />
            <path d="M4 8L7 11L12 4.500" fill="none" stroke="#fff" strokeWidth="2.200" />
          </svg>
          <span className="ml-3">Ready</span>
        </div>
        <div className="ml-[2px] min-w-0 flex-[313] border-l border-t border-[#a0a0a0] pl-px">No Selection</div>
        <div className="ml-[2px] flex w-[135px] gap-2 border-l border-t border-[#a0a0a0] pl-px">
          <span>Meter</span>
          <span>Degree</span>
        </div>
        <div className="ml-[2px] w-[39px] border-l border-t border-[#a0a0a0] pl-px">0</div>
        <div className="ml-[2px] w-[39px] border-l border-t border-[#a0a0a0] pl-px">0</div>
        <svg width="13" height="21" viewBox="0 0 13 21" stroke="#909090" strokeWidth="1.500" aria-hidden="true">
          <path d="M1 20L13 8M5 20L13 12M9 20L13 16" />
        </svg>
      </div>
      <div className="flex h-[3px] border-t border-[#28486c] bg-[#9cbcd8] pl-[122px]">
        <span className="h-[2px] w-[58px] rounded-t-sm bg-[#e4ecf4]" />
        <span className="ml-[66px] h-[2px] w-[58px] rounded-t-sm bg-[#e4ecf4]" />
        <span className="ml-[66px] h-[2px] w-[58px] rounded-t-sm bg-[#e4ecf4]" />
        <span className="ml-1 h-[2px] w-[54px] rounded-t-sm bg-[#e4ecf4]" />
      </div>
    </footer>
  )
}

export default function App() {
  return (
    <div className="flex h-screen flex-col overflow-hidden bg-[#efefef] font-['Open_Sans',sans-serif] text-black">
      <TitleBar />
      <MenuBar />
      <Toolbars />
      <main className="flex min-h-0 flex-1 border-b-4 border-t-[3px] border-[#808080] bg-[#808080] pl-[3px]">
        <div className="flex w-[364px] shrink-0 flex-col border-b-2 border-[#808080]">
          <TreeOutline />
          <DetailsView />
        </div>
        <Graphics />
      </main>
      <StatusBar />
    </div>
  )
}
